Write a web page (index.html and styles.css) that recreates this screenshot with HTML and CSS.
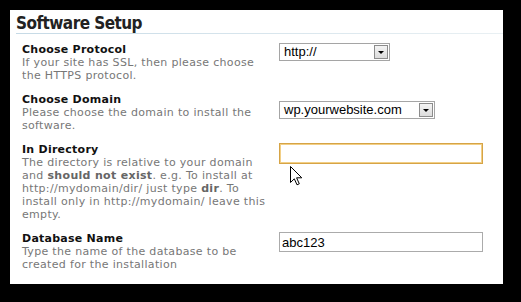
FILE: index.html
```html
<!DOCTYPE html>
<html>
<head>
<meta charset="utf-8">
<link rel="stylesheet" href="styles.css">
</head>
<body>
<div class="panel">
  <h2 class="title">Software Setup</h2>
  <div class="form">
    <div class="row">
      <div class="info">
        <div class="label">Choose Protocol</div>
        <div class="desc">If your site has SSL, then please choose the HTTPS protocol.</div>
      </div>
      <div class="field">
        <div class="select select-proto">
          <span class="value">http://</span>
          <span class="btn"><span class="tri"></span></span>
        </div>
      </div>
    </div>
    <div class="row">
      <div class="info">
        <div class="label">Choose Domain</div>
        <div class="desc">Please choose the domain to install the software.</div>
      </div>
      <div class="field field-domain">
        <div class="select select-domain">
          <span class="value">wp.yourwebsite.com</span>
          <span class="btn"><span class="tri"></span></span>
        </div>
      </div>
    </div>
    <div class="row">
      <div class="info">
        <div class="label">In Directory</div>
        <div class="desc">The directory is relative to your domain and <b>should not exist</b>. e.g. To install at http://mydomain/dir/ just type <b>dir</b>. To install only in http://mydomain/ leave this empty.</div>
      </div>
      <div class="field field-dir">
        <input class="text text-focus" type="text" value="">
        <svg class="cursor" width="13" height="20" viewBox="0 0 13 20"><path d="M0.5 0.5 L0.5 16.5 L4.3 12.8 L7 18.8 L9.3 17.8 L6.6 11.8 L11.8 11.8 Z" fill="#fff" stroke="#000" stroke-width="1" stroke-linejoin="miter"/></svg>
      </div>
    </div>
    <div class="row">
      <div class="info">
        <div class="label">Database Name</div>
        <div class="desc">Type the name of the database to be created for the installation</div>
      </div>
      <div class="field">
        <input class="text" type="text" value="abc123">
      </div>
    </div>
  </div>
</div>
</body>
</html>
```
FILE: styles.css
```css
html, body {
  margin: 0;
  padding: 0;
  background: #000;
}
body {
  padding: 10px 0 0 10px;
}
.panel {
  width: 493px;
  height: 274px;
  background: #fff;
  box-sizing: border-box;
  padding: 3px 0 0 6px;
  font-family: "DejaVu Sans", Verdana, sans-serif;
}
.title {
  margin: 0;
  font-family: "DejaVu Sans Condensed", "DejaVu Sans", sans-serif;
  font-size: 17px;
  line-height: 20px;
  font-weight: bold;
  letter-spacing: -0.55px;
  color: #222;
  padding-bottom: 1px;
  background: linear-gradient(to right, #c6dae6, #e9f0f3) left bottom / 100% 1px no-repeat;
}
.form {
  padding: 9px 0 0 6px;
  display: flex;
  flex-direction: column;
  gap: 11px;
}
.row {
  display: grid;
  grid-template-columns: 257px 1fr;
}
.info {
  font-size: 11px;
  line-height: 13px;
  letter-spacing: 0.32px;
  width: 250px;
}
.label {
  font-weight: bold;
  letter-spacing: 0.25px;
  color: #111;
}
.desc {
  color: #777;
}
.desc b {
  color: #666;
}
.field {
  position: relative;
}
.field-domain {
  padding-top: 8px;
}
.select {
  display: flex;
  align-items: stretch;
  box-sizing: border-box;
  height: 18px;
  border: 1px solid #a5a5a5;
  background: #fff;
  padding: 1px;
  font-family: "Liberation Sans", Arial, sans-serif;
  font-size: 13px;
  color: #000;
}
.select-proto { width: 111px; }
.select-domain { width: 156px; }
.value {
  flex: 1;
  line-height: 14px;
  padding-left: 3px;
}
.btn {
  width: 14px;
  box-sizing: border-box;
  border: 1px solid #8c8c8c;
  background: linear-gradient(#f4f4f4, #dcdcdc);
  display: flex;
  align-items: center;
  justify-content: center;
}
.tri {
  width: 0;
  height: 0;
  border-left: 3px solid transparent;
  border-right: 3px solid transparent;
  border-top: 3px solid #000;
  margin-top: 1px;
}
.text {
  display: block;
  box-sizing: border-box;
  width: 204px;
  height: 20px;
  margin: 0;
  border: 1px solid #ababab;
  padding: 0 2px;
  font-family: "Liberation Sans", Arial, sans-serif;
  font-size: 13px;
  color: #000;
  outline: none;
}
.text-focus {
  height: 21px;
  border-color: #d6a446;
  box-shadow: inset 0 0 0 1px #f2cf86;
}
.cursor {
  position: absolute;
  left: 11px;
  top: 23px;
}
```
